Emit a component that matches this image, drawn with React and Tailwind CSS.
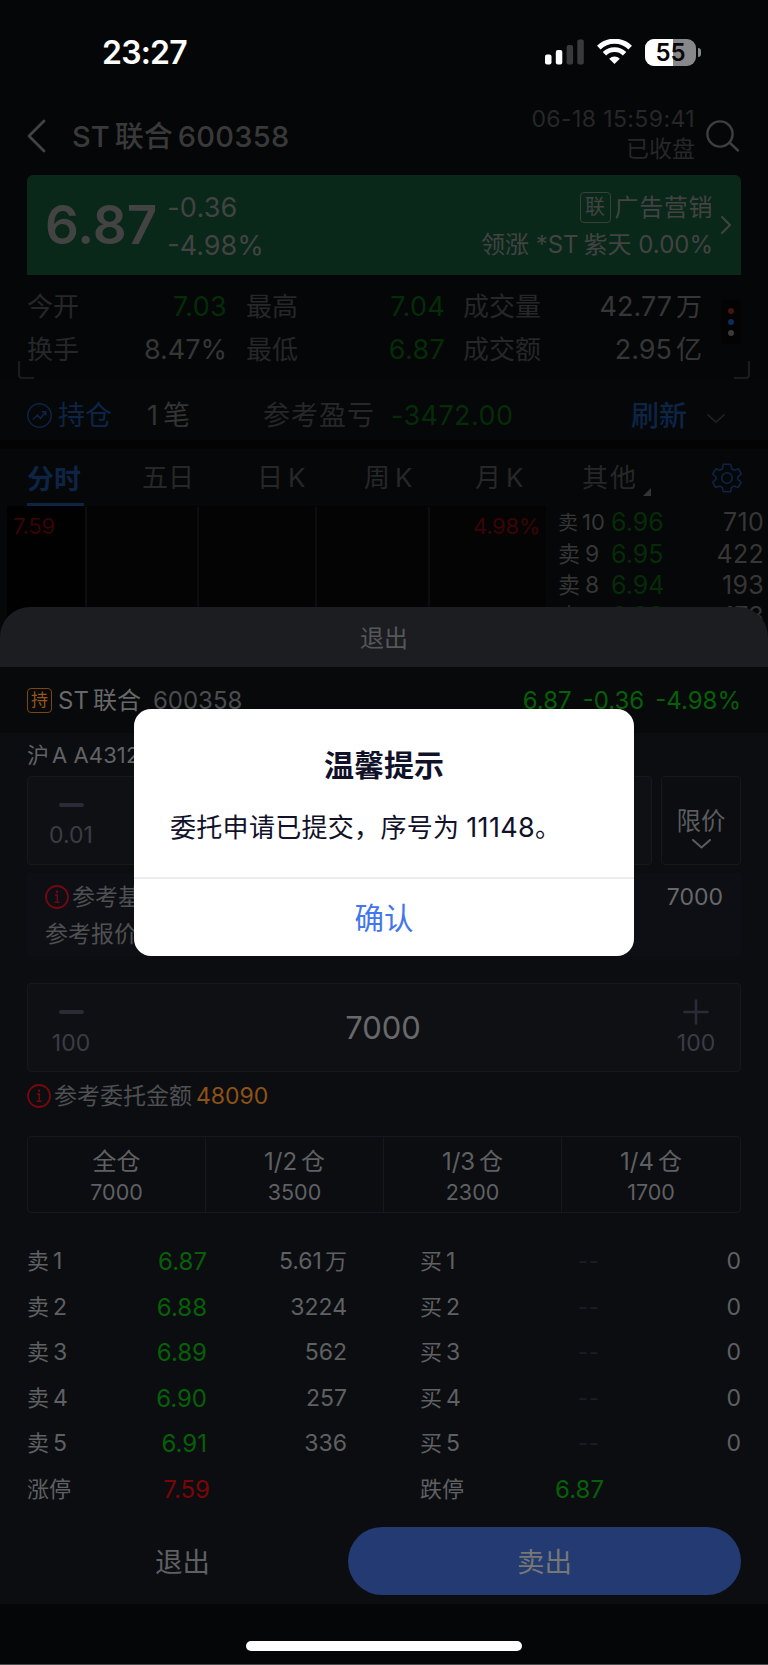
import React from "react";

const stats = [
  [
    { label: "今开", value: "7.03", down: true },
    { label: "换手", value: "8.47%" },
  ],
  [
    { label: "最高", value: "7.04", down: true },
    { label: "最低", value: "6.87", down: true },
  ],
  [
    { label: "成交量", value: "42.77", unit: "万" },
    { label: "成交额", value: "2.95", unit: "亿" },
  ],
];

const depth = [
  { level: "10", price: "6.96", qty: "710" },
  { level: "9", price: "6.95", qty: "422" },
  { level: "8", price: "6.94", qty: "193" },
  { level: "7", price: "6.93", qty: "173" },
];

const positions = [
  { label: "全", qty: "7000" },
  { label: "1/2", qty: "3500" },
  { label: "1/3", qty: "2300" },
  { label: "1/4", qty: "1700" },
];

const orders = [
  { level: "1", price: "6.87", qty: "5.61", unit: "万" },
  { level: "2", price: "6.88", qty: "3224" },
  { level: "3", price: "6.89", qty: "562" },
  { level: "4", price: "6.90", qty: "257" },
  { level: "5", price: "6.91", qty: "336" },
];

const Chevron = ({ className, d, box, width = 2 }) => (
  <svg className={className} viewBox={box} fill="none" stroke="currentColor" strokeWidth={width} strokeLinecap="round" strokeLinejoin="round">
    <path d={d} />
  </svg>
);

const InfoIcon = () => (
  <svg className="size-6 shrink-0 text-[#73090f]" viewBox="0 0 24 24" fill="none" stroke="currentColor">
    <circle cx="12" cy="12" r="11" strokeWidth="1.8" />
    <path d="M10 10h2.3v7M9.7 17.3h4.8" strokeWidth="1.4" />
    <circle cx="12" cy="6.8" r="1.2" fill="currentColor" stroke="none" />
  </svg>
);

const StatusBar = () => (
  <div className="flex h-[104px] items-center justify-between pl-[102px] pr-[67px] text-white">
    <span className="pt-[2px] text-[32px] font-semibold leading-none tracking-[-0.8px]">23:27</span>
    <div className="flex items-center">
      <svg className="h-[26px] w-[39px]" viewBox="0 0 39 26">
        <rect x="0" y="15.5" width="6.5" height="10" rx="2" fill="#fff" />
        <rect x="10.8" y="11" width="6.5" height="14.5" rx="2" fill="#fff" />
        <rect x="21.6" y="6" width="6.5" height="19.5" rx="2" fill="#3a3a3c" />
        <rect x="32.3" y="0.5" width="6.5" height="25" rx="2" fill="#3a3a3c" />
      </svg>
      <svg className="ml-[13px] h-[26px] w-[35px]" viewBox="0 0 35 26" fill="none" stroke="#fff">
        <path d="M1.8 8.6a22.3 22.3 0 0 1 31.4 0" strokeWidth="5" />
        <path d="M7.4 14.8a14.4 14.4 0 0 1 20.2 0" strokeWidth="4.8" />
        <path d="M17.5 25l-5.3-5.3a7.6 7.6 0 0 1 10.6 0z" fill="#fff" stroke="none" />
      </svg>
      <div className="relative ml-[13px] flex h-[27px] w-[51px] items-center justify-center overflow-hidden rounded-[9px] bg-[#88888a]">
        <div className="absolute inset-y-0 left-0 w-[28px] bg-white" />
        <span className="relative pt-px text-[24px] font-semibold leading-none text-[#08080a]">55</span>
      </div>
      <div className="ml-[2px] h-[9px] w-[3px] rounded-r-full bg-[#88888a]" />
    </div>
  </div>
);

const StockHeader = () => (
  <div className="flex h-[71px] items-center pl-[27px] pr-[28px] pb-[7px]">
    <Chevron className="h-[34px] w-[19px] text-[#434345]" box="0 0 19 34" d="M17 2 2 17l15 15" width={2.8} />
    <h1 className="ml-[26px] text-[29px] font-medium leading-none text-[#39393a]">
      ST<span className="mx-[5px]">联合</span>
      <span className="tracking-[0.3px]">600358</span>
    </h1>
    <div className="-mt-[4px] ml-auto text-right text-[23px] leading-[30px] text-[#262728]">
      <p className="tracking-[0.4px]">06-18 15:59:41</p>
      <p>已收盘</p>
    </div>
    <svg className="ml-[11px] h-[32px] w-[34px] text-[#3f3f41]" viewBox="0 0 34 32" fill="none" stroke="currentColor" strokeWidth="2.4" strokeLinecap="round">
      <circle cx="14" cy="14" r="12.6" />
      <path d="m24 23 8 7.500" />
    </svg>
  </div>
);

const PriceBanner = () => (
  <div className="mx-[27px] flex h-[100px] items-center rounded-t-md bg-[#092819] pl-[18px] pr-[9px] text-[#434344]">
    <span className="text-[53px] font-semibold leading-none">6.87</span>
    <div className="ml-[10px] pt-[3px] text-[27px] leading-[38px]">
      <p className="tracking-[0.2px]">-0.36</p>
      <p>-4.98%</p>
    </div>
    <div className="ml-auto mr-[8px] pt-[2px] text-[24px] leading-[37px]">
      <p className="flex items-center justify-end">
        <span className="mr-[4px] flex size-[31px] items-center justify-center rounded border border-[#37403b] text-[20px]">联</span>
        <span className="tracking-[0.6px]">广告营销</span>
      </p>
      <p>
        领涨 *ST<span className="ml-[5px]">紫天</span> 0.00%
      </p>
    </div>
    <Chevron className="h-[20px] w-[11px]" box="0 0 11 20" d="m1 2 8 8-8 8" />
  </div>
);

const Stats = () => (
  <div className="flex h-[104px] pl-[27px] pr-[27px] pt-[10px] text-[26px] leading-[43px]">
    {stats.map((col, i) => (
      <div key={i} className={i === 0 ? "w-[200px]" : i === 1 ? "ml-[19px] w-[199px]" : "ml-[18px] w-[239px]"}>
        {col.map((s) => (
          <div key={s.label} className="flex justify-between">
            <span className="text-[#262728]">{s.label}</span>
            <span className={s.down ? "text-[27px] tracking-[0.3px] text-[#042d07]" : "text-[27px] text-[#363637]"}>
              {s.value}
              {s.unit && <span className="ml-[4px] text-[26px]">{s.unit}</span>}
            </span>
          </div>
        ))}
      </div>
    ))}
    <div className="ml-auto mt-[15px] flex h-[44px] w-[20px] flex-col items-center justify-center gap-[5px] rounded bg-[#030304]">
      <i className="size-[6px] rounded-full bg-[#45140f]" />
      <i className="size-[6px] rounded-full bg-[#0e2a59]" />
      <i className="size-[6px] rounded-full bg-[#3b3b3c]" />
    </div>
  </div>
);

const Holding = () => (
  <>
    <div className="-mt-[18px] flex h-[18px] justify-between px-[18px]">
      <div className="w-4 rounded-bl border-b-2 border-l-2 border-[#1b1c1d]" />
      <div className="w-4 rounded-br border-b-2 border-r-2 border-[#1b1c1d]" />
    </div>
    <div className="flex h-[61px] items-center bg-[#060708] pl-[27px] pr-[43px] pt-[12px] text-[27px] leading-none">
      <svg className="size-[25px] text-[#0d2445]" viewBox="0 0 25 25" fill="none" stroke="currentColor" strokeWidth="1.5">
        <circle cx="12.5" cy="12.500" r="11.700" />
        <path d="m6 16.500 4.500-4.500 3 3.500L18.500 9M14.800 8.800h3.900v3.700" />
      </svg>
      <span className="ml-[6px] text-[#0d2445]">持仓</span>
      <span className="ml-[35px] text-[#343435]">
        1<span className="ml-[5px]">笔</span>
      </span>
      <span className="ml-[73px] tracking-[1px] text-[#262728]">参考盈亏</span>
      <span className="ml-[16px] tracking-[0.4px] text-[#042d07]">-3472.00</span>
      <span className="ml-auto mr-[20px] text-[28px] font-medium text-[#0d2445]">刷新</span>
      <Chevron className="mt-[7px] h-[10px] w-[18px] text-[#1f2021]" box="0 0 20 11" d="m1 1 9 8 9-8" />
    </div>
    <div className="h-[9px] bg-[#030304]" />
  </>
);

const Tabs = () => (
  <div className="flex h-[57px] items-center bg-[#060708] pl-[27px] pr-[26px] text-[26px] leading-none text-[#262728]">
    <div className="flex h-full w-[57px] flex-col justify-between pt-[17px] text-[27px] font-bold text-[#0d2445]">
      分时
      <i className="h-[3px] bg-[#0d2445]" />
    </div>
    <span className="ml-[58px] w-[115px]">五日</span>
    <span className="w-[107px]">
      日<span className="ml-[5px]">K</span>
    </span>
    <span className="w-[111px]">
      周<span className="ml-[5px]">K</span>
    </span>
    <span className="w-[107px]">
      月<span className="ml-[5px]">K</span>
    </span>
    <span className="tracking-[2px]">其他</span>
    <svg className="ml-[5px] mt-[28px] size-2" viewBox="0 0 8 8">
      <path d="M8 0v8H0z" fill="#343435" />
    </svg>
    <svg className="ml-auto size-[30px] text-[#0d2445]" viewBox="0 0 30 30" fill="none" stroke="currentColor" strokeWidth="1.6" strokeLinejoin="round">
      <path d="M11.300 1.200h7.400l1 4.600 2.400 1.400 4.400-1.400 2.800 5.200-3.500 3.200v2l3.300 3.200-2.900 5.100-4.300-1.400-2.400 1.400-1 4.300h-7.200l-1-4.300-2.400-1.400-4.300 1.400-2.900-5.100 3.400-3.200v-2L.8 11l2.900-5.200 4.300 1.400 2.400-1.400z" />
      <circle cx="15" cy="15" r="5.300" />
    </svg>
  </div>
);

const Chart = () => (
  <div className="flex h-[161px] overflow-hidden bg-[#060708] text-[22px] leading-none">
    <div className="ml-[7px] flex w-[539px] border-r border-t border-[#020203] bg-[#040405] text-[#390406]">
      <div className="w-[80px] border-r-2 border-[#0d0d0f] bg-[#010101] pl-[6px] pt-[8px] tracking-[-0.2px]">7.59</div>
      <div className="w-[112px] border-r-2 border-[#0d0d0f]" />
      <div className="w-[118px] border-r-2 border-[#0d0d0f]" />
      <div className="w-[113px] border-r-2 border-[#0d0d0f]" />
      <div className="flex-1 pr-[5px] pt-[8px] text-right tracking-[-0.3px]">4.98%</div>
    </div>
    <div className="flex-1 pl-[12px] pr-[4px] pt-[1px] leading-[31px] text-[#363637]">
      {depth.map((d) => (
        <div key={d.level} className="flex text-[25px]">
          <span className={d.level === "10" ? "w-[53px] text-[22px]" : "w-[53px] text-[23px]"}>
            <span className={d.level === "10" ? "mr-[4px] text-[20px]" : "mr-[5px] text-[22px]"}>卖</span>
            {d.level}
          </span>
          <span className="text-[#042d07]">{d.price}</span>
          <span className="ml-auto tracking-[0.3px]">{d.qty}</span>
        </div>
      ))}
    </div>
  </div>
);

const SheetHeader = () => (
  <>
    <div className="flex h-[60px] items-center justify-center rounded-t-[30px] bg-[#1c1d21] pt-[3px] text-[24px] leading-none text-[#565759]">退出</div>
    <div className="flex h-[66px] items-center bg-[#08090b] px-[27px] pt-px text-[24px] leading-none text-[#67686a]">
      <span className="flex size-[25px] items-center justify-center rounded border border-[#7a4613] text-[17px] text-[#98571a]">持</span>
      <span className="ml-[6px]">
        ST<span className="ml-[4px]">联合</span>
      </span>
      <span className="ml-[12px] text-[24px] text-[#4b4c4e]">600358</span>
      <span className="ml-auto flex gap-[11px] text-[#066007]">
        <span>6.87</span>
        <span>-0.36</span>
        <span>-4.98%</span>
      </span>
    </div>
  </>
);

const PriceSection = () => (
  <div className="px-[27px] leading-none">
    <div className="flex h-[43px] items-center text-[22px] text-[#626365]">
      沪<span className="ml-[3px] tracking-[0.1px]">A A4312</span>
    </div>
    <div className="flex h-[89px] gap-[9px]">
      <div className="flex flex-1 rounded border border-[#17181e] bg-[#0f1014]">
        <div className="flex w-[86px] flex-col items-center pt-[26px]">
          <i className="h-1 w-[25px] rounded-full bg-[#2a2b36]" />
          <span className="mt-[17px] text-[23px] text-[#3b3c44]">0.01</span>
        </div>
      </div>
      <div className="flex w-[80px] flex-col items-center rounded border border-[#17181e] pt-[32px] text-[24.5px] text-[#5b5c5e]">
        限价
        <Chevron className="mt-[5px] h-[10px] w-[19px]" box="0 0 19 10" d="m1 1 8.500 7.500L18 1" />
      </div>
    </div>
    <div className="mt-[8px] flex h-[83px] flex-col gap-[14px] bg-[#0e0f14] px-[18px] pt-[12px] text-[23px] text-[#4f5052]">
      <div className="flex items-center">
        <InfoIcon />
        <span className="ml-[3px]">参考基</span>
        <span className="ml-auto pt-px text-[#67686a]">7000</span>
      </div>
      <span>参考报价</span>
    </div>
  </div>
);

const QuantitySection = () => (
  <div className="px-[27px] leading-none">
    <div className="mt-[27px] flex h-[89px] items-center justify-between rounded border border-[#17181e] bg-[#0f1014] text-[#3b3c44]">
      <div className="flex w-[86px] flex-col items-center pt-[10px]">
        <i className="mb-[18px] h-1 w-[25px] rounded-full bg-[#2a2b36]" />
        <span className="text-[23px]">100</span>
      </div>
      <span className="text-[31px] text-[#68696b]">7000</span>
      <div className="flex w-[88px] flex-col items-center pb-[2px]">
        <svg className="mb-[7px] size-[26px]" viewBox="0 0 26 26" stroke="#2a2b36" strokeWidth="2.6" strokeLinecap="round">
          <path d="M1.500 13h23M13 1.500v23" />
        </svg>
        <span className="text-[23px]">100</span>
      </div>
    </div>
    <div className="flex h-[48px] items-center text-[23px] text-[#4f5052]">
      <InfoIcon />
      <span className="ml-[3px]">参考委托金额</span>
      <span className="ml-[4px] text-[#8d5216]">48090</span>
    </div>
    <div className="mt-[16px] grid h-[77px] grid-cols-4 divide-x divide-[#17181e] rounded border border-[#17181e] text-[#5f6062]">
      {positions.map((p) => (
        <div key={p.label} className="flex flex-col items-center pt-[13px]">
          <span className="text-[24px]">
            {p.label}
            <span className={p.label === "全" ? "" : "ml-[4px]"}>仓</span>
          </span>
          <span className="mt-[8px] text-[21.5px]">{p.qty}</span>
        </div>
      ))}
    </div>
  </div>
);

const OrderBook = () => (
  <div className="mt-[26px] px-[27px] text-[22px] leading-[45.5px] text-[#5f6062]">
    {orders.map((o) => (
      <div key={o.level} className="flex">
        <span className="w-[80px]">
          卖<span className="ml-[4px] text-[23px]">{o.level}</span>
        </span>
        <span className="w-[100px] text-right text-[24px] text-[#066007]">{o.price}</span>
        <span className="w-[140px] text-right">
          <span className="text-[23px]">{o.qty}</span>
          {o.unit && <span className="ml-[3px]">{o.unit}</span>}
        </span>
        <span className="ml-[73px] w-[80px]">
          买<span className="ml-[4px] text-[23px]">{o.level}</span>
        </span>
        <span className="w-[100px] text-right tracking-[1px] text-[#1c1d25]">--</span>
        <span className="ml-auto text-[23px]">0</span>
      </div>
    ))}
    <div className="flex">
      <span className="w-[80px]">涨停</span>
      <span className="w-[103px] text-right text-[24px] text-[#7a0507]">7.59</span>
      <span className="ml-[210px] w-[80px]">跌停</span>
      <span className="w-[104px] text-right text-[24px] text-[#066007]">6.87</span>
    </div>
  </div>
);

const Dialog = () => (
  <div className="absolute left-[134px] top-[709px] flex h-[247px] w-[500px] flex-col overflow-hidden rounded-[17px] bg-white leading-none text-[#11112a]">
    <h2 className="pt-[41px] text-center text-[30px] font-bold">温馨提示</h2>
    <p className="mt-[34px] pl-[36px] text-[26px] tracking-[0.3px]">
      委托申请已提交，序号为<span className="ml-[7px] text-[27px]">11148</span>。
    </p>
    <button className="mt-auto h-[79px] border-t-2 border-[#ececee] pt-[2px] text-[29.5px] text-[#4275ee]">确认</button>
  </div>
);

const App = () => (
  <div className="relative h-[1665px] w-[768px] overflow-hidden bg-[#050608] font-['Inter','Noto_Sans_CJK_SC',sans-serif]">
    <StatusBar />
    <StockHeader />
    <PriceBanner />
    <Stats />
    <Holding />
    <Tabs />
    <Chart />
    {/* Order sheet */}
    <div className="relative -mt-[60px]">
      <SheetHeader />
      <div className="h-[871px] bg-[#0c0d11]">
        <PriceSection />
        <QuantitySection />
        <OrderBook />
        <div className="mt-[15px] flex h-[68px] pl-[17px] pr-[27px] text-[27.5px] text-[#5f6062]">
          <button className="w-[331px] pt-[3px]">退出</button>
          <button className="flex-1 rounded-full bg-[#243a72] pt-[3px] text-[#777873]">卖出</button>
        </div>
      </div>
    </div>
    <div className="flex h-[61px] justify-center border-b border-[#4a4b4c] pt-[37px]">
      <div className="h-[10px] w-[276px] rounded-full bg-white" />
    </div>
    <Dialog />
  </div>
);

export default App;
